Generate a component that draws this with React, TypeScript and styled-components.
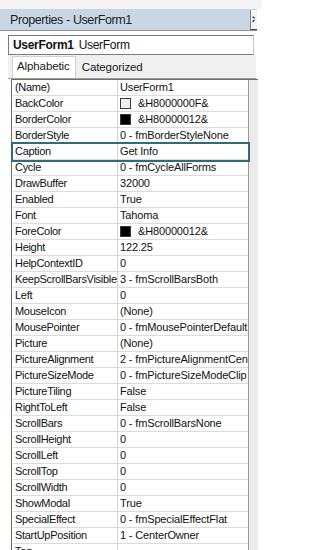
import React from 'react'
import styled, { createGlobalStyle } from 'styled-components'

const GlobalStyle = createGlobalStyle`
  html, body {
    margin: 0;
    padding: 0;
    background: #ffffff;
    overflow: hidden;
  }
  * {
    box-sizing: border-box;
  }
`

interface Prop {
  name: string
  value: string
  swatch?: string
}

const props: Prop[] = [
  { name: '(Name)', value: 'UserForm1' },
  { name: 'BackColor', value: '&H8000000F&', swatch: '#f0f0f0' },
  { name: 'BorderColor', value: '&H80000012&', swatch: '#000000' },
  { name: 'BorderStyle', value: '0 - fmBorderStyleNone' },
  { name: 'Caption', value: 'Get Info' },
  { name: 'Cycle', value: '0 - fmCycleAllForms' },
  { name: 'DrawBuffer', value: '32000' },
  { name: 'Enabled', value: 'True' },
  { name: 'Font', value: 'Tahoma' },
  { name: 'ForeColor', value: '&H80000012&', swatch: '#000000' },
  { name: 'Height', value: '122.25' },
  { name: 'HelpContextID', value: '0' },
  { name: 'KeepScrollBarsVisible', value: '3 - fmScrollBarsBoth' },
  { name: 'Left', value: '0' },
  { name: 'MouseIcon', value: '(None)' },
  { name: 'MousePointer', value: '0 - fmMousePointerDefault' },
  { name: 'Picture', value: '(None)' },
  { name: 'PictureAlignment', value: '2 - fmPictureAlignmentCenter' },
  { name: 'PictureSizeMode', value: '0 - fmPictureSizeModeClip' },
  { name: 'PictureTiling', value: 'False' },
  { name: 'RightToLeft', value: 'False' },
  { name: 'ScrollBars', value: '0 - fmScrollBarsNone' },
  { name: 'ScrollHeight', value: '0' },
  { name: 'ScrollLeft', value: '0' },
  { name: 'ScrollTop', value: '0' },
  { name: 'ScrollWidth', value: '0' },
  { name: 'ShowModal', value: 'True' },
  { name: 'SpecialEffect', value: '0 - fmSpecialEffectFlat' },
  { name: 'StartUpPosition', value: '1 - CenterOwner' },
  { name: 'Tag', value: '' },
]

export default function App() {
  return (
    <>
      <GlobalStyle />
      <Window>
        <TopBand />
        <TitleBar>
          <Title>Properties - UserForm1</Title>
          <CloseButton>
            {/* only the left edge of the close glyph is visible in the window */}
            <svg width="7" height="20" viewBox="0 0 7 20">
              <path d="M2 6 L4 8 M2 12 L4 10" stroke="#222" strokeWidth="1.4" />
            </svg>
          </CloseButton>
        </TitleBar>
        <Combo>
          <ObjName>UserForm1</ObjName>
          <ObjType>UserForm</ObjType>
        </Combo>
        <TabStrip>
          <Tab active>Alphabetic</Tab>
          <Tab>Categorized</Tab>
        </TabStrip>
        <GridArea>
          <Grid>
            {props.map(p => (
              <Row key={p.name} highlighted={p.name === 'Caption'}>
                <NameCell>{p.name}</NameCell>
                <ValueCell>
                  {p.swatch && <Swatch color={p.swatch} />}
                  {p.value}
                </ValueCell>
              </Row>
            ))}
          </Grid>
          <ScrollBar />
        </GridArea>
      </Window>
    </>
  )
}

const Window = styled.div`
  width: 262px;
  height: 550px;
  display: flex;
  flex-direction: column;
  background: #ffffff;
  overflow: hidden;
  font-family: "Liberation Sans", Arial, sans-serif;
  color: #111;
`

const TopBand = styled.div`
  height: 9px;
  flex-shrink: 0;
  background: #f4f4f4;
`

const TitleBar = styled.div`
  height: 22px;
  width: 257px;
  flex-shrink: 0;
  display: flex;
  align-items: center;
  justify-content: space-between;
  padding-left: 10px;
  background: #c9d7e5;
  border-bottom: 1px solid #8d9399;
`

const Title = styled.span`
  font-size: 12.5px;
  letter-spacing: -0.4px;
  color: #1e1e1e;
`

const CloseButton = styled.div`
  width: 7px;
  height: 20px;
  display: flex;
  background: #f2f4f6;
  border-left: 1px solid #7b8187;
  border-bottom: 1px solid #40454a;
`

const Combo = styled.div`
  margin: 4px 0 0 8px;
  width: 246px;
  height: 20px;
  flex-shrink: 0;
  display: flex;
  align-items: center;
  gap: 5px;
  padding-left: 4px;
  border: 1px solid #7c7c7c;
  border-right-color: #c4c4c4;
  font-size: 12px;
  letter-spacing: -0.3px;
`

const ObjName = styled.span`
  font-weight: bold;
`

const ObjType = styled.span`
  font-weight: normal;
`

const TabStrip = styled.div`
  margin-left: 8px;
  width: 248px;
  height: 24px;
  flex-shrink: 0;
  display: flex;
  align-items: flex-end;
  padding-left: 4px;
  background: #f0f0f0;
  border-bottom: 1px solid #a0a0a0;
`

const Tab = styled.div<{ active?: boolean }>`
  height: ${p => (p.active ? '22px' : '19px')};
  padding: ${p => (p.active ? '3px 5px 0 4px' : '2px 5px 0 6px')};
  font-size: 11.5px;
  letter-spacing: -0.1px;
  background: ${p => (p.active ? '#ffffff' : 'transparent')};
  border: ${p => (p.active ? '1px solid #d0d0d0' : 'none')};
  border-bottom: none;
  color: #1a1a1a;
`

const GridArea = styled.div`
  flex: 1;
  min-height: 0;
  display: flex;
  margin-left: 11px;
  width: 247px;
  border-top: 1px solid #6b6b6b;
  overflow: hidden;
`

const Grid = styled.div`
  flex: 1;
  min-width: 0;
  border-left: 1px solid #6b6b6b;
  border-right: 1px solid #9a9a9a;
  padding-left: 1px;
`

const Row = styled.div<{ highlighted?: boolean }>`
  height: 16px;
  display: grid;
  grid-template-columns: 105px 1fr;
  border-bottom: 1px solid #dcdcdc;
  font-size: 11px;
  line-height: 15px;
  white-space: nowrap;
  outline: ${p => (p.highlighted ? '2px solid #2f6b79' : 'none')};
  outline-offset: 0px;
  position: relative;
  z-index: ${p => (p.highlighted ? 1 : 0)};
`

const NameCell = styled.div`
  padding-left: 2px;
  letter-spacing: -0.3px;
  border-right: 1px solid #d4d4d4;
  overflow: hidden;
`

const ValueCell = styled.div`
  display: flex;
  align-items: center;
  padding-left: 2px;
  letter-spacing: -0.15px;
  overflow: hidden;
`

const Swatch = styled.span<{ color: string }>`
  width: 11px;
  height: 11px;
  margin-right: 7px;
  flex-shrink: 0;
  background: ${p => p.color};
  border: 1px solid #3a3a3a;
`

const ScrollBar = styled.div`
  width: 9px;
  background: #ebebeb;
`
